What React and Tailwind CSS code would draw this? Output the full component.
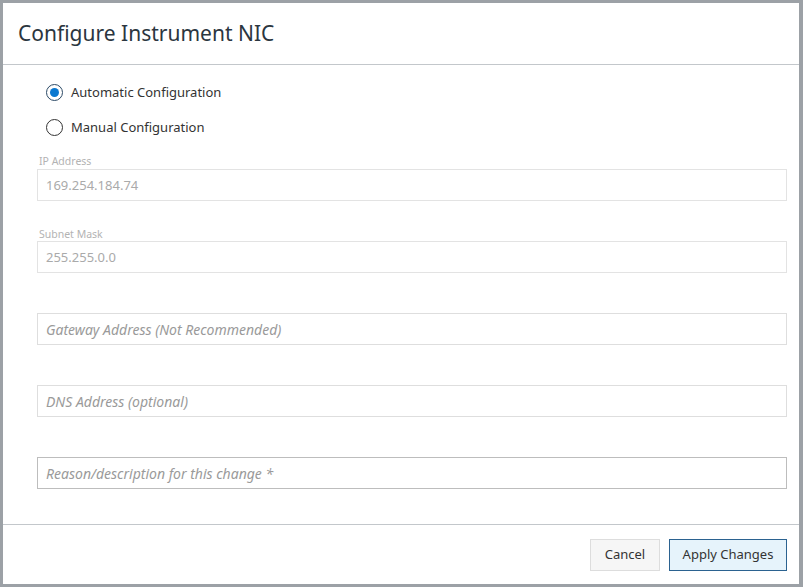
import { useState } from "react";

const Radio = ({ checked, label, onClick }) => (
  <label
    onClick={onClick}
    className="flex h-[35px] cursor-pointer items-center gap-[8px] text-[13px] text-[#333]"
  >
    <span
      className={
        checked
          ? "flex h-[17px] w-[17px] items-center justify-center rounded-full border-[1.5px] border-[#2c4a66] bg-white"
          : "flex h-[17px] w-[17px] items-center justify-center rounded-full border-[1.5px] border-[#333] bg-white"
      }
    >
      {checked && <span className="h-[9px] w-[9px] rounded-full bg-[#0a78d0]" />}
    </span>
    {label}
  </label>
);

const ConfigureNic = () => {
  const [mode, setMode] = useState("auto");
  const [form, setForm] = useState({ gateway: "", dns: "", reason: "" });

  const handleChange = (e) => {
    const { name, value } = e.target;
    setForm((prev) => ({ ...prev, [name]: value }));
  };

  return (
    <div
      className="flex h-[587px] w-[803px] bg-[#9ca1a6] pt-[3px] pr-[4px] pb-[3px] pl-[3px]"
      style={{ fontFamily: '"Noto Sans", "Open Sans", sans-serif' }}
    >
      <div className="flex h-[581px] w-[796px] flex-col bg-white">
        {/* header */}
        <div className="flex h-[62px] items-center border-b border-[#c3c7cb] px-[15px]">
          <h1 className="text-[21px] leading-none text-[#2b3640]">Configure Instrument NIC</h1>
        </div>

        {/* body */}
        <div className="flex flex-col pt-[10px] pr-[12px] pb-[35px] pl-[34px]">
          <div className="ml-[9px] flex flex-col">
            <Radio checked={mode === "auto"} label="Automatic Configuration" onClick={() => setMode("auto")} />
            <Radio checked={mode === "manual"} label="Manual Configuration" onClick={() => setMode("manual")} />
          </div>

          <label className="mt-[9px] ml-[2px] h-[14px] text-[10.5px] leading-[14px] text-[#b3b3b3]">IP Address</label>
          <input
            type="text"
            value="169.254.184.74"
            disabled
            readOnly
            className="mt-[1px] h-[32px] w-full border border-[#e3e3e3] bg-white px-[8px] text-[13px] text-[#aaa]"
          />

          <label className="mt-[26px] ml-[2px] h-[14px] text-[10.5px] leading-[14px] text-[#b3b3b3]">Subnet Mask</label>
          <input
            type="text"
            value="255.255.0.0"
            disabled
            readOnly
            className="h-[32px] w-full border border-[#e3e3e3] bg-white px-[8px] text-[13px] text-[#aaa]"
          />

          <input
            type="text"
            name="gateway"
            value={form.gateway}
            onChange={handleChange}
            placeholder="Gateway Address (Not Recommended)"
            className="mt-[40px] h-[32px] w-full border border-[#dedede] bg-white px-[8px] text-[14px] text-[#333] placeholder:italic placeholder:text-[#9a9a9a] focus:outline-none"
          />

          <input
            type="text"
            name="dns"
            value={form.dns}
            onChange={handleChange}
            placeholder="DNS Address (optional)"
            className="mt-[40px] h-[32px] w-full border border-[#dedede] bg-white px-[8px] text-[14px] text-[#333] placeholder:italic placeholder:text-[#9a9a9a] focus:outline-none"
          />

          <input
            type="text"
            name="reason"
            value={form.reason}
            onChange={handleChange}
            placeholder="Reason/description for this change *"
            className="mt-[40px] h-[32px] w-full border border-[#bdbdbd] bg-white px-[8px] text-[14px] text-[#333] placeholder:italic placeholder:text-[#9a9a9a] focus:outline-none"
          />
        </div>

        {/* footer */}
        <div className="flex flex-1 items-start justify-end gap-[9px] border-t border-[#c3c7cb] pt-[14px] pr-[12px]">
          <button className="h-[32px] w-[70px] border border-[#dddddd] bg-[#f6f6f6] text-[13px] text-[#333]">
            Cancel
          </button>
          <button className="h-[32px] w-[118px] border border-[#2b6290] bg-[#e6f3fb] text-[13px] text-[#333]">
            Apply Changes
          </button>
        </div>
      </div>
    </div>
  );
};

export default function App() {
  return <ConfigureNic />;
}
